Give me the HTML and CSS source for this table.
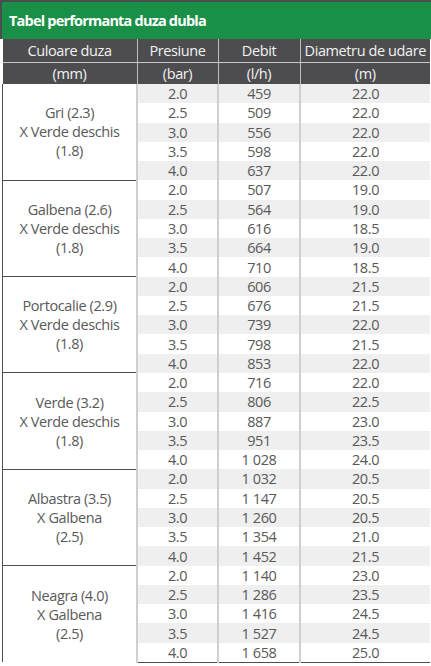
FILE: index.html
```html
<!DOCTYPE html>
<html lang="ro">
<head>
    <meta charset="UTF-8">
    <title>Tabel performanta duza dubla</title>
    <link rel="stylesheet" href="styles.css">
</head>
<body>
    <div class="sheet">
        <h1 class="title">Tabel performanta duza dubla</h1>
        <table class="perf">
            <thead>
                <tr class="head-top">
                    <th>Culoare duza</th>
                    <th>Presiune</th>
                    <th>Debit</th>
                    <th>Diametru de udare</th>
                </tr>
                <tr class="head-unit">
                    <th>(mm)</th>
                    <th>(bar)</th>
                    <th>(l/h)</th>
                    <th>(m)</th>
                </tr>
            </thead>
            <tbody id="rows"></tbody>
        </table>
    </div>

    <script>
        // Performance data per nozzle pair
        const groups = [
            { name: ['Gri (2.3)', 'X Verde deschis', '(1.8)'], flow: ['459', '509', '556', '598', '637'], diam: ['22.0', '22.0', '22.0', '22.0', '22.0'] },
            { name: ['Galbena (2.6)', 'X Verde deschis', '(1.8)'], flow: ['507', '564', '616', '664', '710'], diam: ['19.0', '19.0', '18.5', '19.0', '18.5'] },
            { name: ['Portocalie (2.9)', 'X Verde deschis', '(1.8)'], flow: ['606', '676', '739', '798', '853'], diam: ['21.5', '21.5', '22.0', '21.5', '22.0'] },
            { name: ['Verde (3.2)', 'X Verde deschis', '(1.8)'], flow: ['716', '806', '887', '951', '1 028'], diam: ['22.0', '22.5', '23.0', '23.5', '24.0'] },
            { name: ['Albastra (3.5)', 'X Galbena', '(2.5)'], flow: ['1 032', '1 147', '1 260', '1 354', '1 452'], diam: ['20.5', '20.5', '20.5', '21.0', '21.5'] },
            { name: ['Neagra (4.0)', 'X Galbena', '(2.5)'], flow: ['1 140', '1 286', '1 416', '1 527', '1 658'], diam: ['23.0', '23.5', '24.5', '24.5', '25.0'] }
        ];
        const pressures = ['2.0', '2.5', '3.0', '3.5', '4.0'];

        let html = '';
        let n = 0;
        groups.forEach(function(g) {
            pressures.forEach(function(p, i) {
                n++;
                html += '<tr class="' + (n % 2 ? 'shade' : '') + '">';
                if (i === 0) {
                    html += '<td class="name" rowspan="5">' + g.name.join('<br>') + '</td>';
                }
                html += '<td>' + p + '</td><td>' + g.flow[i] + '</td><td>' + g.diam[i] + '</td></tr>';
            });
        });
        document.getElementById('rows').innerHTML = html;
    </script>
</body>
</html>
```

FILE: styles.css
```css
body { margin: 0; background: #fff; font-family: "Open Sans", sans-serif; }
.sheet { width: 431px; }
.title { margin: 0; height: 39px; display: flex; align-items: center; padding-left: 7px; background: #1a8f47; color: #fff; font-size: 14.5px; font-weight: 700; letter-spacing: -0.8px; border-top: 2px solid #4d4d4f; border-left: 2px solid #4d4d4f; box-sizing: border-box; }
.perf { margin-left: 2px; width: 428px; border-collapse: collapse; table-layout: fixed; font-size: 14.5px; letter-spacing: -0.4px; }
.perf th { background: #4d4d4f; color: #f2f2f2; font-weight: 400; text-align: center; padding: 0; border-left: 1px solid #bdbdbd; white-space: nowrap; }
.perf th:first-child { border-left: none; width: 134px; }
.perf th:nth-child(2) { width: 80px; }
.perf th:nth-child(3) { width: 81px; }
.head-top th { height: 23px; border-bottom: 1px solid #c8c8c8; }
.head-unit th { height: 21px; }
.perf td { height: 19.27px; padding: 0; text-align: center; color: #595959; line-height: 19px; border-left: 2px solid #cfcfcf; }
.perf tr.shade td { background: #efeff0; }
.perf td.name { background: #fff !important; border-left: 1px solid #4d4d4f; border-right: 1px solid #9a9a9a; border-top: 1px solid #4d4d4f; line-height: 19px; }
.perf tbody tr:first-child td.name { border-top: none; }
.perf tbody tr:last-child td { border-bottom: 1px solid #4d4d4f; }
```
